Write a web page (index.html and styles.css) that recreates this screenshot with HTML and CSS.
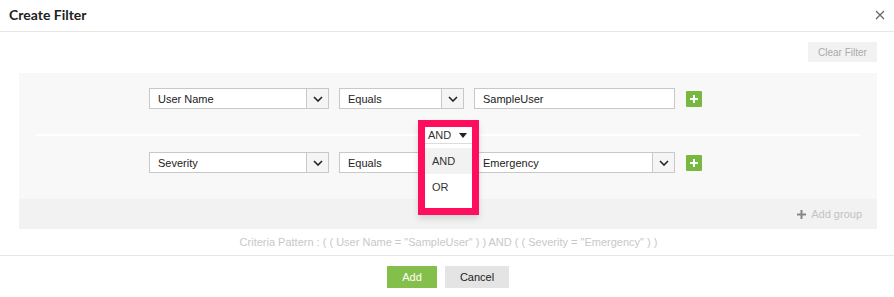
FILE: index.html
```html
<!DOCTYPE html>
<html>
<head>
<meta charset="utf-8">
<link rel="stylesheet" href="styles.css">
</head>
<body>
<div class="dialog">
  <header class="hd">
    <h1 class="title">Create Filter</h1>
    <span class="close"><svg width="10" height="10" viewBox="0 0 10 10"><path d="M1 1L9 9M9 1L1 9" stroke="#666" stroke-width="1.2" fill="none"/></svg></span>
  </header>
  <div class="bd">
    <div class="toolbar"><span class="clear">Clear Filter</span></div>
    <div class="panel">
      <div class="group">
        <div class="row">
          <div class="sel w1"><span class="val">User Name</span><span class="chev"><svg width="10" height="6" viewBox="0 0 10 6"><path d="M1 1L5 5L9 1" stroke="#222" stroke-width="1.6" fill="none"/></svg></span></div>
          <div class="sel w2"><span class="val">Equals</span><span class="chev"><svg width="10" height="6" viewBox="0 0 10 6"><path d="M1 1L5 5L9 1" stroke="#222" stroke-width="1.6" fill="none"/></svg></span></div>
          <div class="inp w3">SampleUser</div>
          <span class="plus"><svg width="10" height="10" viewBox="0 0 10 10"><path d="M5 1V9M1 5H9" stroke="#fff" stroke-width="2" fill="none"/></svg></span>
        </div>
        <div class="divider"></div>
        <div class="row">
          <div class="sel w1"><span class="val">Severity</span><span class="chev"><svg width="10" height="6" viewBox="0 0 10 6"><path d="M1 1L5 5L9 1" stroke="#222" stroke-width="1.6" fill="none"/></svg></span></div>
          <div class="sel w2"><span class="val">Equals</span><span class="chev"><svg width="10" height="6" viewBox="0 0 10 6"><path d="M1 1L5 5L9 1" stroke="#222" stroke-width="1.6" fill="none"/></svg></span></div>
          <div class="sel w3"><span class="val">Emergency</span><span class="chev"><svg width="10" height="6" viewBox="0 0 10 6"><path d="M1 1L5 5L9 1" stroke="#222" stroke-width="1.6" fill="none"/></svg></span></div>
          <span class="plus"><svg width="10" height="10" viewBox="0 0 10 10"><path d="M5 1V9M1 5H9" stroke="#fff" stroke-width="2" fill="none"/></svg></span>
        </div>
        <div class="andpop">
          <div class="andsel"><span>AND</span><svg width="8" height="5" viewBox="0 0 8 5"><path d="M0 0H8L4 5Z" fill="#222"/></svg></div>
          <div class="opt active">AND</div>
          <div class="opt">OR</div>
        </div>
      </div>
      <div class="addgroup"><svg width="9" height="9" viewBox="0 0 9 9"><path d="M4.5 0V9M0 4.5H9" stroke="#888" stroke-width="2" fill="none"/></svg><span>Add group</span></div>
    </div>
    <div class="criteria">Criteria Pattern : ( ( User Name = "SampleUser" ) ) AND ( ( Severity = "Emergency" ) )</div>
  </div>
  <footer class="ft">
    <span class="btn add">Add</span>
    <span class="btn cancel">Cancel</span>
  </footer>
</div>
</body>
</html>
```
FILE: styles.css
```css
* { box-sizing: border-box; }
html, body { margin: 0; padding: 0; background: #fff; }
body { font-family: "Liberation Sans", Arial, sans-serif; font-size: 11px; color: #333; }
.dialog { width: 894px; height: 297px; display: flex; flex-direction: column; }
.hd { height: 32px; border-bottom: 1px solid #e6e6e6; display: flex; align-items: center; justify-content: space-between; padding: 0 9px 2px 9px; }
.title { margin: 0; font-family: Lato, "Liberation Sans", sans-serif; font-weight: 700; font-size: 14px; color: #222; }
.close { display: flex; margin-right: 0; margin-top: 1px; }
.bd { padding: 10px 17px 0 19px; }
.toolbar { display: flex; justify-content: flex-end; }
.clear { width: 69px; height: 20px; background: #f2f2f2; color: #aaa; font-size: 10px; display: flex; align-items: center; justify-content: center; }
.panel { margin-top: 11px; background: #f8f8f8; }
.group { position: relative; padding: 15px 0 26px 0; }
.row { display: flex; align-items: center; padding-left: 130px; height: 21px; }
.sel, .inp { height: 21px; border: 1px solid #c8c8c8; background: #fff; display: flex; align-items: center; font-size: 11px; color: #222; }
.val { flex: 1; padding-left: 8px; }
.inp { padding-left: 8px; }
.chev { width: 22px; height: 100%; border-left: 1px solid #c8c8c8; background: #f5f5f5; display: flex; align-items: center; justify-content: center; }
.w1 { width: 180px; margin-right: 10px; }
.w2 { width: 125px; margin-right: 10px; }
.w3 { width: 201px; margin-right: 11px; }
.plus { width: 16px; height: 16px; background: #76b840; border-radius: 1px; display: flex; align-items: center; justify-content: center; }
.divider { height: 2px; background: #fff; margin: 25px 17px 16px 17px; }
.andpop { position: absolute; left: 399px; top: 47px; width: 61px; height: 95px; border: 7px solid #fe0e5c; background: #fff; box-shadow: 0 4px 6px rgba(0,0,0,0.12); display: flex; flex-direction: column; }
.andsel { height: 17px; border-bottom: 1px solid #dcdcdc; display: flex; align-items: center; justify-content: space-between; padding: 0 5px 0 3px; font-size: 11px; color: #333; margin-bottom: 4px; }
.opt { height: 26px; display: flex; align-items: center; padding-left: 7px; font-size: 11px; color: #333; }
.opt.active { background: #f2f2f2; }
.addgroup { height: 30px; background: #f2f2f2; display: flex; align-items: center; justify-content: flex-end; padding-right: 15px; gap: 5px; color: #c2c2c2; font-size: 11px; }
.criteria { height: 26px; line-height: 26px; text-align: center; color: #c8c8c8; font-size: 11px; padding-left: 1px; }
.ft { border-top: 1px solid #e6e6e6; display: flex; justify-content: center; gap: 8px; padding-top: 10px; padding-left: 2px; }
.btn { height: 22px; display: flex; align-items: center; justify-content: center; font-size: 11px; }
.add { width: 50px; background: #85bf4b; color: #fff; }
.cancel { width: 64px; background: #e4e4e4; color: #222; }
```
